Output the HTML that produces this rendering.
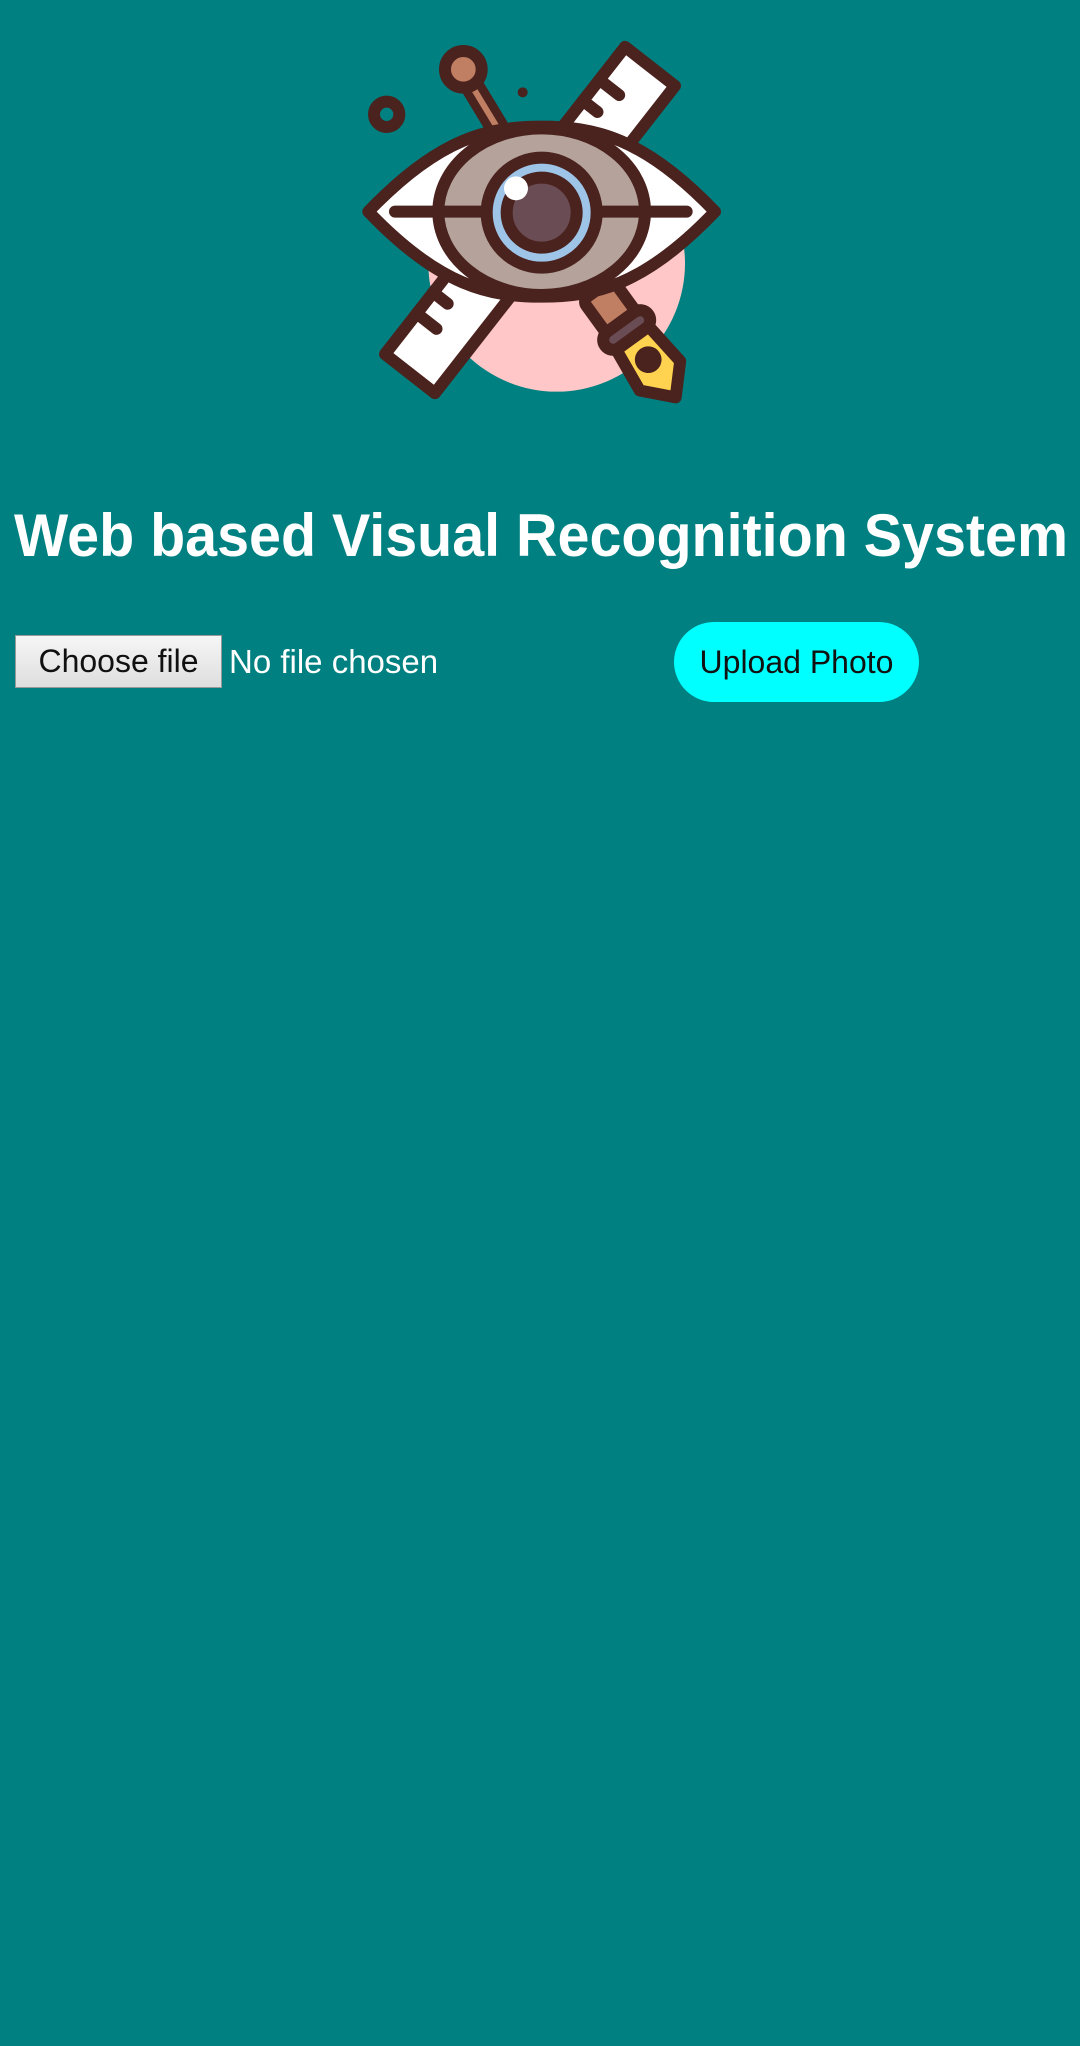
<!DOCTYPE html>
<html><head><meta charset="utf-8"><style>
html,body{margin:0;padding:0;}
body{width:1080px;height:2046px;background:#008080;position:relative;overflow:hidden;font-family:"Liberation Sans",Arial,sans-serif;}
#logo{position:absolute;left:340px;top:30px;width:400px;height:380px;}
#title{position:absolute;left:0;top:490px;width:1080px;height:90px;}
.cf{position:absolute;left:15px;top:635px;width:207px;height:53px;background:linear-gradient(#f6f6f6,#dedede);border:1px solid #999;box-sizing:border-box;font-size:32px;color:#111;text-align:center;line-height:51px;}
.nf{position:absolute;left:229px;top:635px;height:53px;line-height:53px;font-size:33px;color:#fff;}
.up{position:absolute;left:674px;top:622px;width:245px;height:80px;background:#00ffff;border-radius:40px;font-size:32px;color:#111;text-align:center;line-height:80px;}
</style></head><body>
<svg id="logo" viewBox="0 0 1200 1140" xmlns="http://www.w3.org/2000/svg">
<g stroke="#4a221e" stroke-width="36" stroke-linejoin="round" stroke-linecap="round">
<circle cx="650" cy="700" r="385" fill="#ffc7c7" stroke="none"/>
<g transform="translate(570,570) rotate(-52)">
<rect x="-585" y="-95" width="1170" height="190" fill="#fff"/>
<line x1="-430" y1="-95" x2="-430" y2="-20"/><line x1="-350" y1="-95" x2="-350" y2="-40"/>
<line x1="380" y1="-95" x2="380" y2="-40"/><line x1="460" y1="-95" x2="460" y2="-20"/>
</g>
<line x1="370" y1="125" x2="470" y2="290" stroke-width="70"/>
<line x1="370" y1="125" x2="470" y2="290" stroke="#c07f62" stroke-width="18"/>
<circle cx="370" cy="118" r="55" fill="#c07f62"/>
<g transform="translate(860,900) rotate(-36)">
<rect x="-55" y="-150" width="110" height="130" rx="20" fill="#c07f62"/>
<rect x="-80" y="-30" width="160" height="60" rx="30" fill="#6a4c55"/>
<path d="M-60 30 L60 30 L75 170 L0 250 L-75 170 Z" fill="#ffd24f"/>
<circle cx="0" cy="110" r="22" fill="#4a221e"/>
</g>
<path d="M85 545 C300 320 450 290 605 290 C760 290 910 320 1125 545 C910 770 760 800 605 800 C450 800 300 770 85 545 Z" fill="#fff"/>
<ellipse cx="605" cy="545" rx="310" ry="250" fill="#b5a39b"/>
<line x1="165" y1="545" x2="1040" y2="545"/>
<circle cx="605" cy="548" r="165" fill="#9ec5e8"/>
<circle cx="605" cy="548" r="105" fill="#6a4c55"/>
<circle cx="528" cy="475" r="36" fill="#fff" stroke="none"/>
<circle cx="140" cy="253" r="38" fill="none"/>
<circle cx="548" cy="187" r="15" fill="#4a221e" stroke="none"/>
</g>
</svg>
<svg id="title" viewBox="0 0 1080 90" xmlns="http://www.w3.org/2000/svg">
<text x="14" y="66" font-family="Liberation Sans, Arial, sans-serif" font-weight="bold" font-size="60" fill="#fff" textLength="1054" lengthAdjust="spacingAndGlyphs">Web based Visual Recognition System</text>
</svg>
<div class="cf">Choose file</div>
<div class="nf">No file chosen</div>
<div class="up">Upload Photo</div>
</body></html>
